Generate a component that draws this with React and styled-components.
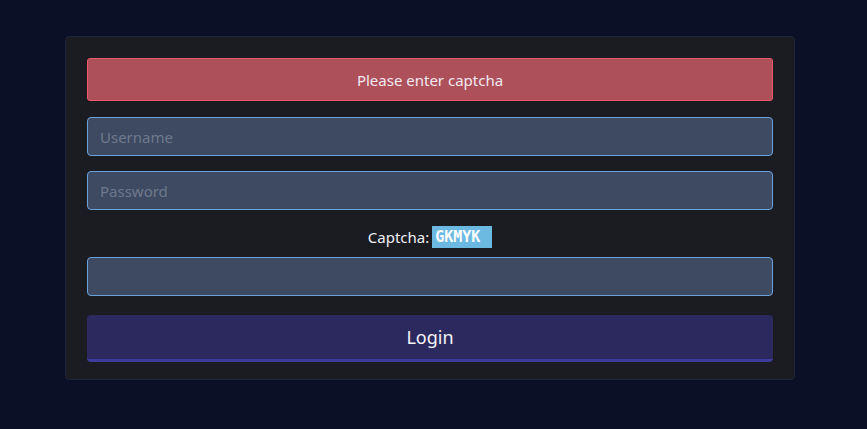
import React from 'react'
import styled, { createGlobalStyle } from 'styled-components'

const GlobalStyle = createGlobalStyle`
  html, body {
    margin: 0;
    padding: 0;
    background-color: #0b1026;
    font-family: 'Noto Sans', 'Liberation Sans', sans-serif;
  }
`

function App() {
  return (
    <>
      <GlobalStyle />
      <Page>
        <Card>
          <Alert>Please enter captcha</Alert>
          <Input type="text" placeholder="Username" />
          <Input type="password" placeholder="Password" />
          <CaptchaRow>
            Captcha:
            <CaptchaCode>GKMYK</CaptchaCode>
          </CaptchaRow>
          <Input type="text" $last />
          <LoginButton type="button">Login</LoginButton>
        </Card>
      </Page>
    </>
  )
}

const Page = styled.div`
  padding: 36px 0 0 65px;
`

const Card = styled.div`
  box-sizing: border-box;
  width: 730px;
  height: 344px;
  padding: 21px;
  background-color: #1b1b22;
  border: 1px solid #1c2738;
  border-radius: 4px;
  display: flex;
  flex-direction: column;
`

const Alert = styled.div`
  box-sizing: border-box;
  flex: none;
  height: 43px;
  display: flex;
  align-items: center;
  justify-content: center;
  background-color: #ad505a;
  border: 1px solid #f2566a;
  border-radius: 3px;
  color: #f1eaf0;
  font-size: 15px;
  margin-bottom: 16px;
`

const Input = styled.input`
  box-sizing: border-box;
  flex: none;
  display: block;
  width: 100%;
  height: 39px;
  padding: 0 12px;
  margin: 0 0 ${(p) => (p.$last ? '19px' : '15px')} 0;
  background-color: #3d4a62;
  border: 1px solid #6aa3dc;
  border-radius: 4px;
  color: #dfe5ee;
  font-family: 'Noto Sans', 'Liberation Sans', sans-serif;
  font-size: 15px;
  outline: none;
  &::placeholder {
    color: #6e798b;
  }
`

const CaptchaRow = styled.div`
  flex: none;
  display: flex;
  align-items: center;
  justify-content: center;
  gap: 3px;
  height: 22px;
  margin: 1px 0 9px;
  color: #f0f0f4;
  font-size: 15px;
`

const CaptchaCode = styled.span`
  box-sizing: border-box;
  display: inline-flex;
  align-items: center;
  width: 60px;
  height: 22px;
  padding-left: 3px;
  background-color: #6cb9e2;
  color: #ffffff;
  font-family: 'DejaVu Sans Mono', 'Liberation Mono', monospace;
  font-size: 15px;
  font-weight: 600;
`

const LoginButton = styled.button`
  box-sizing: border-box;
  flex: none;
  width: 100%;
  height: 47px;
  border: none;
  border-bottom: 3px solid #3d3c9c;
  border-radius: 4px;
  background-color: #2c295e;
  color: #f4f4fa;
  font-family: 'Noto Sans', 'Liberation Sans', sans-serif;
  font-size: 18px;
  cursor: pointer;
`

export default App
